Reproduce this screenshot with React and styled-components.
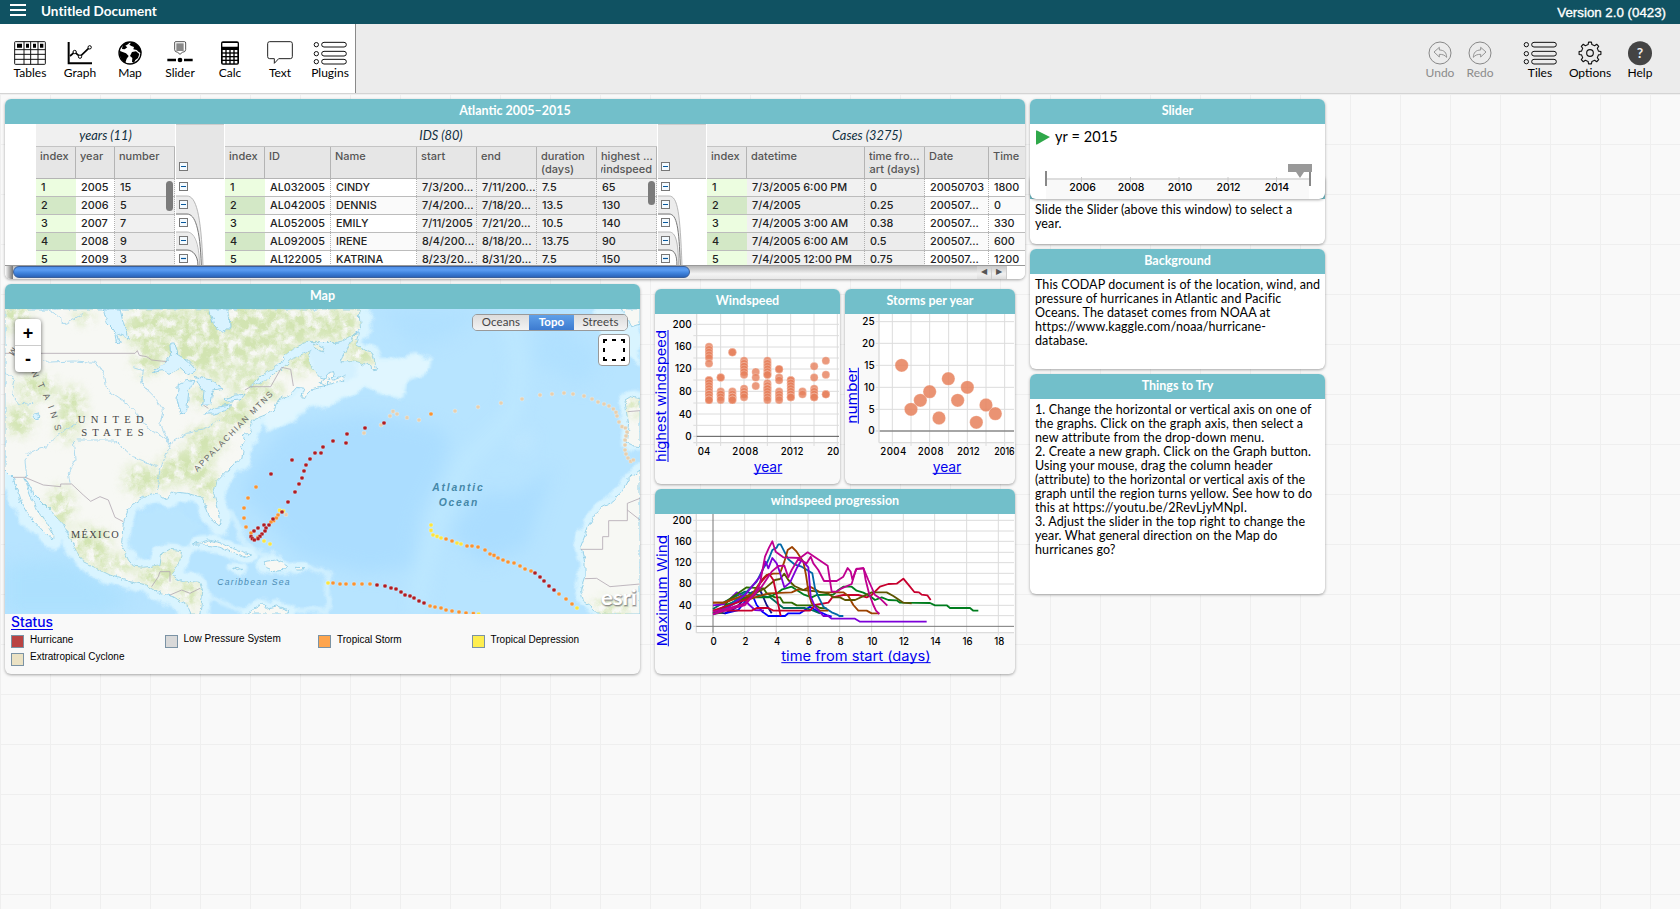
import React from 'react';
import styled, { createGlobalStyle, css } from 'styled-components';

const MUSEO = 'Lato, "Open Sans", sans-serif';
const MONT = 'Inter, "Open Sans", sans-serif';
const ARIAL = '"Liberation Sans", Arial, sans-serif';
const TEAL = '#72bfca';

const GlobalStyle = createGlobalStyle`
  * { box-sizing: border-box; }
  body { margin: 0; background: #f9f9f9; font-family: ${MUSEO}; overflow: hidden; }
`;

const Page = styled.div`
  display: flex;
  flex-direction: column;
  height: 909px;
`;

const TopBar = styled.header`
  display: flex;
  align-items: center;
  justify-content: space-between;
  height: 24px;
  padding: 0 14px 3px 10px;
  background: #105262;
  color: #fff;
`;
const TopLeft = styled.div`
  display: flex;
  align-items: center;
  gap: 15px;
`;
const DocTitle = styled.span`
  font: 700 13.5px ${MUSEO};
  letter-spacing: 0.03px;
`;
const Version = styled.span`
  font: 400 13.3px ${ARIAL};
  -webkit-text-stroke: 0.35px #fff;
  padding-top: 4px;
`;

const Toolbar = styled.nav`
  display: flex;
  justify-content: space-between;
  height: 70px;
  background: #ececec;
  border-bottom: 1px solid #d4d4d4;
`;
const ToolGroup = styled.div`
  display: flex;
  padding: ${(p) => (p.$right ? '17px 15px 0 0' : '17px 0 0 5px')};
  width: ${(p) => (p.$right ? 'auto' : '356px')};
  ${(p) => !p.$right && css`background: #fff; border-right: 1px solid #8a8a8a;`}
`;
const ToolButton = styled.div`
  display: flex;
  flex-direction: column;
  align-items: center;
  width: ${(p) => p.$w || 50}px;
  margin-right: ${(p) => p.$mr || 0}px;
  font: 400 12px/14px ${MUSEO};
  color: ${(p) => (p.$dim ? '#8b8b8b' : '#000')};
  svg { display: block; width: 36px; height: 25px; overflow: visible; }
  span { margin-top: 0; white-space: nowrap; }
`;

const Canvas = styled.main`
  position: relative;
  flex: 1;
  background-color: #f9f9f9;
  background-image:
    linear-gradient(to right, #efefef 1px, transparent 1px),
    linear-gradient(to bottom, #efefef 1px, transparent 1px);
  background-size: 50px 50px;
`;

const Tile = styled.section`
  position: absolute;
  left: ${(p) => p.$x}px;
  top: ${(p) => p.$y - 94}px;
  width: ${(p) => p.$w}px;
  height: ${(p) => p.$h}px;
  display: flex;
  flex-direction: column;
  border-radius: 6px;
  overflow: hidden;
  background: ${(p) => p.$bg || '#fff'};
  box-shadow: 0 1px 3px rgba(0, 0, 0, 0.35);
`;
const TileTitle = styled.h2`
  flex: none;
  margin: 0;
  height: 25px;
  background: ${TEAL};
  color: #fff;
  text-align: center;
  font: 700 12.5px/23px ${MUSEO};
`;

/* ---------- case table ---------- */
const TableBody = styled.div`
  display: flex;
  height: 141px;
  padding-left: 31px;
  overflow: hidden;
`;
const Collection = styled.div`
  position: relative;
  flex: none;
  width: ${(p) => p.$w}px;
`;
const CollectionTitle = styled.div`
  height: 22px;
  background: #f0f0f0;
  text-align: center;
  padding-right: ${(p) => p.$shift || 0}px;
  font: italic 400 12.8px/23px ${MUSEO};
  color: #0f2f40;
`;
const HeadRow = styled.div`
  display: flex;
  height: 33px;
  background: #e6e6e6;
  border-top: 1px solid #c4c4c4;
  border-bottom: 1px solid #b4b4b4;
`;
const HeadCell = styled.div`
  flex: none;
  width: ${(p) => p.$w}px;
  padding: 3px 0 0 4px;
  border-right: 1px solid #b4b4b4;
  font: 500 11px/12.5px ${MONT};
  color: #555;
  white-space: nowrap;
  overflow: hidden;
`;
const HeadLine = styled.div`
  display: flex;
  overflow: hidden;
  ${(p) => p.$clip && css`justify-content: flex-end; margin-right: 4px;`}
`;
const Row = styled.div`
  display: flex;
  height: 18px;
  border-bottom: 1px solid #bcbcbc;
`;
const cellColor = (p) => {
  if (p.$kind === 'index') return p.$even ? '#d3e8c6' : '#ecfde0';
  if (p.$kind === 'formula') return p.$even ? '#ececec' : '#f1f1f1';
  return p.$even ? '#fafafa' : '#fff';
};
const Cell = styled.div`
  flex: none;
  width: ${(p) => p.$w}px;
  padding-left: 5px;
  border-right: 1px ${(p) => (p.$kind === 'index' ? 'solid transparent' : 'dotted #b0b0b0')};
  background: ${cellColor};
  font: 500 10.85px/17px ${MONT};
  color: #222;
  white-space: nowrap;
  overflow: hidden;
`;
const VThumb = styled.div`
  position: absolute;
  right: 2px;
  top: 57px;
  width: 7px;
  height: ${(p) => p.$h}px;
  border-radius: 4px;
  background: #7b7b7b;
`;
const Divider = styled.div`
  position: relative;
  flex: none;
  width: 50px;
  padding: 0 1px;
  svg { display: block; width: 48px; height: 141px; }
`;
const HScroll = styled.div`
  display: flex;
  height: 14px;
  border-top: 1px solid #999;
  background: linear-gradient(#b5b5b5, #f4f4f4 60%, #e8e8e8);
`;
const HTrackEdge = styled.div`
  width: 8px;
  background: linear-gradient(to right, #fff, #aaa 60%, #777);
`;
const HThumb = styled.div`
  width: 677px;
  height: 12px;
  border-radius: 6px;
  border: 1px solid #3a5f99;
  background: linear-gradient(#4f8fe8, #5b9df2 30%, #3f83dd 60%, #2a63b8);
`;
const HArrows = styled.div`
  display: flex;
  margin-left: auto;
  padding-right: 18px;
  background: #fff;
  span {
    width: 15px;
    border-right: 1px solid #ccc;
    background: linear-gradient(#c8c8c8, #f0f0f0 60%, #ddd);
    color: #555;
    font: 8px/12px "DejaVu Sans", sans-serif;
    text-align: center;
  }
`;

const ARCS = [0, 1, 2, 3];
function Relation({ dx }) {
  return (
    <Divider>
      <svg viewBox="0 0 48 141">
        <rect width="48" height="54" fill="#e6e6e6" />
        <path d="M0 .5H48" stroke="#ccc" />
        <path d="M0 54.5H48" stroke="#b4b4b4" />
        <path d={`M0 72H11C21 72 ${25 + dx} 90 ${27 + dx} 141H${25 + dx}C${23 + dx} 100 20 91 11 91H0Z`} fill="#ececec" />
        <path d={`M0 108H11C18 108 22 120 ${24 + dx} 141H${22 + dx}C20 130 16 127 11 127H0Z`} fill="#ececec" />
        {ARCS.map((i) => (
          <path key={i} fill="none" stroke={i % 2 ? '#777' : '#aaa'} strokeWidth={i % 2 ? 1 : 0.8}
            d={`M0 ${72 + i * 18}H11C${20 - i} ${72 + i * 18} ${25 + dx - i} ${90 + i * 14} ${27 + dx - i * 1.7} 141`} />
        ))}
        {[43, 63, 81, 99, 117, 135].map((y) => (
          <g key={y}>
            <rect x="3.5" y={y - 4.5} width="8" height="8" fill="#f3faff" stroke="#777" />
            <path d={`M5 ${y - 0.5}H10`} stroke="#07589c" strokeWidth="1.2" />
          </g>
        ))}
      </svg>
    </Divider>
  );
}

const YEARS = {
  title: 'years (11)', w: 139, shift: 0, thumb: 30,
  cols: [['index', 40, 'index'], ['year', 39], ['number', 60, 'formula']],
  rows: [['1', '2005', '15'], ['2', '2006', '5'], ['3', '2007', '7'], ['4', '2008', '9'], ['5', '2009', '3']],
};
const IDS = {
  title: 'IDS (80)', w: 432, shift: 0, thumb: 24,
  cols: [['index', 40, 'index'], ['ID', 66], ['Name', 86], ['start', 60, 'formula'], ['end', 60, 'formula'],
    ['duration|(days)', 60, 'formula'], ['highest ...|windspeed', 60, 'formula', true]],
  rows: [
    ['1', 'AL032005', 'CINDY', '7/3/200...', '7/11/200...', '7.5', '65'],
    ['2', 'AL042005', 'DENNIS', '7/4/200...', '7/18/20...', '13.5', '130'],
    ['3', 'AL052005', 'EMILY', '7/11/2005', '7/21/20...', '10.5', '140'],
    ['4', 'AL092005', 'IRENE', '8/4/200...', '8/18/20...', '13.75', '90'],
    ['5', 'AL122005', 'KATRINA', '8/23/20...', '8/31/20...', '7.5', '150'],
  ],
};
const CASES = {
  title: 'Cases (3275)', w: 324, shift: 4,
  cols: [['index', 40, 'index'], ['datetime', 118, 'formula'], ['time fro...|start (days)', 60, 'formula', true],
    ['Date', 64], ['Time', 42]],
  rows: [
    ['1', '7/3/2005 6:00 PM', '0', '20050703', '1800'],
    ['2', '7/4/2005', '0.25', '200507...', '0'],
    ['3', '7/4/2005 3:00 AM', '0.38', '200507...', '330'],
    ['4', '7/4/2005 6:00 AM', '0.5', '200507...', '600'],
    ['5', '7/4/2005 12:00 PM', '0.75', '200507...', '1200'],
  ],
};

function CollectionTable({ data }) {
  return (
    <Collection $w={data.w}>
      <CollectionTitle $shift={data.shift}>{data.title}</CollectionTitle>
      <HeadRow>
        {data.cols.map(([name, w, , clip]) => (
          <HeadCell key={name} $w={w}>
            {name.split('|').map((line, i) => <HeadLine key={line} $clip={clip && i === 1}>{line}</HeadLine>)}
          </HeadCell>
        ))}
      </HeadRow>
      {data.rows.map((row, r) => (
        <Row key={row[0]}>
          {row.map((v, c) => (
            <Cell key={c} $w={data.cols[c][1]} $kind={data.cols[c][2]} $even={r % 2 === 1}>{v}</Cell>
          ))}
        </Row>
      ))}
      {data.thumb && <VThumb $h={data.thumb} />}
    </Collection>
  );
}

/* ---------- text & slider tiles ---------- */
const TextBody = styled.div`
  padding: 4px 5px 0;
  font: 400 12.5px/14px ${MUSEO};
  color: #000;
  letter-spacing: 0.1px;
  div { white-space: nowrap; }
`;
const SliderHead = styled.div`
  display: flex;
  align-items: center;
  gap: 5px;
  padding: 5px 0 0 6px;
  font: 400 14.5px/16px ${MUSEO};
  letter-spacing: 0.1px;
`;
const SliderScale = styled.svg`
  display: block;
  width: 295px;
  height: 40px;
  margin-top: 14px;
  font: 500 10.5px ${MONT};
`;

/* ---------- map tile ---------- */
const MapArea = styled.div`
  position: relative;
  flex: none;
  height: 305px;
`;
const MapDrawing = styled.svg`
  display: block;
  width: 635px;
  height: 305px;
`;
const ZoomBox = styled.div`
  position: absolute;
  left: 10px;
  top: 10px;
  width: 26px;
  height: 53px;
  border-radius: 4px;
  background: #fff;
  box-shadow: 0 1px 4px rgba(0, 0, 0, 0.6);
  font: 700 18px/29px ${ARIAL};
  text-align: center;
  div:first-child { height: 27px; border-bottom: 1px solid #ccc; }
  div:last-child { line-height: 26px; }
`;
const Segments = styled.div`
  position: absolute;
  right: 12px;
  top: 5px;
  display: flex;
  height: 17px;
  border: 1px solid #999;
  border-radius: 5px;
  overflow: hidden;
`;
const Segment = styled.div`
  width: ${(p) => p.$w}px;
  text-align: center;
  font: ${(p) => (p.$on ? 700 : 400)} 11.5px/14px ${MUSEO};
  letter-spacing: 0.1px;
  color: ${(p) => (p.$on ? '#fff' : '#444')};
  background: ${(p) => (p.$on ? 'linear-gradient(#5fa0e8, #3d7bd0)' : 'linear-gradient(#dcdcdc, #f3f3f3)')};
`;
const Marquee = styled.div`
  position: absolute;
  right: 10px;
  top: 25px;
  width: 32px;
  height: 32px;
  border: 1px solid #999;
  border-radius: 4px;
  background: #fff;
  padding: 4px;
  svg { display: block; }
`;
const Legend = styled.div`
  padding: 0 6px;
`;
const LegendTitle = styled.div`
  width: 44px;
  font: 500 13.8px/17px ${MONT};
  color: #00e;
  text-decoration: underline;
  text-underline-offset: 2px;
`;
const LegendGrid = styled.div`
  display: grid;
  grid-template-columns: repeat(4, 153.5px);
  row-gap: 5px;
  margin-top: 3px;
`;
const LegendItem = styled.div`
  display: flex;
  align-items: flex-start;
  gap: 6px;
  height: 13px;
  font: 400 10px/10px ${ARIAL};
  color: #000;
  white-space: nowrap;
  i { flex: none; width: 13px; height: 13px; border: 1px solid #7b93a5; background: ${(p) => p.$c}; margin-top: 1px; }
  span { margin-top: ${(p) => (p.$up ? 0 : 1)}px; }
`;

const NA = 'M15 87H1080L1078 110 1082 150 1050 170 1030 182 1010 187 960 188 920 187 880 205 855 225 840 250 780 290 750 322 800 300 850 262 880 235 930 212 925 240 940 268 962 292 1000 300 1040 285 1030 300 990 312 940 325 915 352 902 350 912 325 890 322 870 345 830 362 820 390 795 405 762 418 748 440 756 455 730 465 735 480 722 500 732 515 728 535 705 548 680 575 650 605 640 640 655 690 663 720 655 738 640 725 625 700 615 670 600 650 560 640 520 635 508 645 500 660 470 640 430 652 390 678 370 725 365 790 385 840 400 858 430 862 480 855 485 820 510 808 545 812 540 840 525 870 515 885 545 905 600 910 608 935 600 1002H572L560 975 520 950 480 940 440 915 390 905 330 885 250 845 230 815 190 735 150 690 100 640 75 595 90 640 110 690 140 730 160 765 158 778 140 765 90 710 60 660 40 595 15 570Z';
const AFRICA = 'M1920 570L1885 597 1865 635 1840 665 1800 685 1765 740 1742 800 1755 850 1755 890 1742 930 1750 965 1780 985 1795 1002H1920Z';
const SPAIN = 'M1920 352L1895 348 1875 360 1880 400 1886 430 1878 490 1895 497 1920 500Z';
const FRANCE = 'M1860 87L1885 115 1895 140 1920 132V87Z';
const NFLD = 'M1020 245L1045 200 1065 160 1078 158 1070 195 1095 210 1115 215 1125 245 1130 270 1118 272 1105 250 1090 255 1060 245Z';
const ISLANDS = 'M580 795L625 780 670 790 700 805 755 825 740 832 690 815 660 802 620 795ZM790 845L830 840 865 860 850 868 815 872 800 866ZM885 862L912 863 908 870 887 870ZM700 864L725 868 712 872ZM740 1002L765 985 790 970 800 985 830 978 865 990V1002ZM960 310L985 280 1000 275 1005 288 975 318ZM940 192L975 205 970 216 945 205Z';
const LAKES = 'M460 277L490 252 515 222 512 190 522 188 530 222 560 240 590 272 562 285 540 265 510 280 490 272ZM535 312L560 298 582 302 566 335 560 392 542 402 531 360ZM585 290L632 300 668 325 640 330 632 372 608 378 612 335 600 318ZM608 402L650 382 698 374 690 386 640 402ZM672 357L700 346 735 343 720 360 682 364ZM628 87L640 130 668 160 690 140 686 87ZM310 87L322 130 342 150 350 188 360 186 352 160 385 175 370 130 360 87ZM100 405L112 395 120 412 108 418Z';
const RIVERS = 'M130 247L220 243 290 247 315 290 320 330 380 370 410 400 450 450 490 470 515 490 M420 290L440 330 470 360 490 390 480 430 510 495 480 570 470 630 M230 480L340 480 400 530 470 560 M510 490L560 460 610 450 660 420 M80 520L140 500 190 450 230 430 M15 280L45 300 35 340 60 375 100 370 M80 590L75 540 90 520 M220 480L225 540 205 580 210 608 M150 90L200 130 250 100 M400 260L430 270 425 310';
const GREENS = [[520, 150, 150, 70], [700, 150, 130, 90], [850, 130, 120, 60], [600, 220, 100, 50], [900, 240, 60, 40], [1010, 130, 60, 40], [780, 330, 70, 30], [700, 400, 55, 45], [620, 480, 60, 45], [560, 560, 80, 50], [620, 620, 40, 40], [480, 600, 40, 25], [420, 600, 50, 45], [200, 440, 30, 50], [110, 320, 60, 40], [40, 110, 50, 40], [60, 420, 40, 50], [215, 380, 40, 60], [180, 680, 40, 60], [270, 790, 60, 50], [340, 850, 70, 25], [470, 890, 60, 35], [520, 850, 35, 35], [570, 940, 30, 50], [250, 110, 30, 20], [440, 250, 40, 35], [600, 350, 25, 30], [1080, 220, 50, 40], [1830, 985, 60, 25], [1900, 380, 30, 25]];

const HURRICANE = [[876, 540], [813, 582], [969, 501], [945, 519], [963, 519], [930, 537], [918, 555], [912, 573], [906, 594], [897, 612], [885, 636], [864, 666], [846, 696], [819, 717], [807, 735], [792, 735], [798, 744], [774, 744], [795, 753], [762, 753], [786, 762], [753, 770], [780, 769], [757, 776], [774, 776], [763, 780], [999, 483], [1038, 489], [1041, 462], [1095, 444], [1152, 429],
  [1131, 915], [1155, 918], [1173, 924], [1188, 927], [1203, 936], [1215, 945], [1230, 948], [1242, 954], [1257, 963], [1272, 969], [1605, 879], [1620, 891], [1632, 903], [1647, 918], [1662, 930]];
const STORM = [[768, 621], [744, 654], [732, 684], [732, 714], [738, 741], [753, 759], [774, 772], [834, 705], [829, 714], [821, 722], [813, 726], [1293, 402], [999, 909], [1020, 912], [1038, 912], [1062, 912], [1086, 912], [1110, 912], [1290, 978], [1305, 981], [1323, 984], [1338, 990], [1356, 993], [1377, 996], [1398, 999], [1420, 1001], [1338, 777], [1356, 783], [1401, 798], [1416, 798], [1434, 801], [1455, 810], [1470, 822], [1482, 826], [1494, 834], [1509, 840], [1524, 846], [1542, 849], [1560, 858], [1575, 867], [1593, 873], [1677, 942], [1698, 957], [1716, 972]];
const DEPRESSION = [[839, 691], [850, 693], [792, 783], [810, 792], [984, 909], [1293, 735], [1293, 751], [1299, 765], [1311, 769], [1323, 774], [1371, 789], [1383, 792], [1731, 984], [1436, 1002]];
const CYCLONE = [[1143, 435], [1092, 459], [1170, 408], [1179, 394], [1191, 402], [1221, 413], [1257, 420], [1365, 393], [1434, 381], [1503, 369], [1566, 357], [1620, 345], [1656, 342], [1692, 339], [1719, 342], [1752, 348], [1776, 357], [1794, 366], [1812, 372], [1827, 378], [1840, 387], [1848, 397], [1851, 408], [1857, 426], [1866, 440], [1876, 444], [1881, 456], [1878, 468], [1875, 480], [1875, 495], [1875, 510], [1878, 522], [1884, 534], [1892, 544], [1900, 540], [858, 704]];

const Dots = ({ pts, fill }) => pts.map(([x, y], i) => (
  <rect key={i} x={x - 5.5} y={y - 5.5} width="11" height="11" rx="3" fill={fill} stroke="#fff" strokeOpacity=".4" strokeWidth="2" />
));

const Atlas = () => (
  <MapDrawing viewBox="15 87 1905 915" preserveAspectRatio="none">
    <defs>
      <filter id="soft" x="-20%" y="-20%" width="140%" height="140%" colorInterpolationFilters="sRGB"><feGaussianBlur stdDeviation="26" /></filter>
      <filter id="shelf" x="-10%" y="-10%" width="120%" height="120%" colorInterpolationFilters="sRGB">
        <feGaussianBlur stdDeviation="5" result="b" />
        <feTurbulence type="fractalNoise" baseFrequency="0.02" numOctaves="3" seed="3" result="t" />
        <feDisplacementMap in="b" in2="t" scale="34" xChannelSelector="R" yChannelSelector="G" />
      </filter>
      <filter id="mottle" x="0" y="0" width="100%" height="100%" colorInterpolationFilters="sRGB">
        <feGaussianBlur stdDeviation="16" result="b" />
        <feTurbulence type="fractalNoise" baseFrequency="0.035" numOctaves="5" seed="4" />
        <feColorMatrix values="0 0 0 0 0  0 0 0 0 0  0 0 0 0 0  2.6 0 0 0 -0.65" result="n" />
        <feComposite in="b" in2="n" operator="in" />
      </filter>
      <filter id="rough" x="-5%" y="-5%" width="110%" height="110%" colorInterpolationFilters="sRGB">
        <feTurbulence type="fractalNoise" baseFrequency="0.05" numOctaves="3" seed="8" result="t" />
        <feDisplacementMap in="SourceGraphic" in2="t" scale="16" xChannelSelector="R" yChannelSelector="G" />
      </filter>
      <clipPath id="landclip"><path d={NA + AFRICA + SPAIN + FRANCE + NFLD + ISLANDS} /></clipPath>
    </defs>
    <rect x="15" y="87" width="1905" height="915" fill="#b7e4ff" />
    <g filter="url(#soft)">
      <path d="M760 560L860 440 1100 400 1300 440 1350 470 1330 560 1260 700 1240 860 1100 880 900 830 780 700 720 640Z" fill="#abddff" />
      <path d="M1660 560L1560 640 1440 640 1350 760 1450 850 1580 800Z" fill="#abddff" />
      <path d="M1140 87L1240 200 1340 180 1440 100 1500 87ZM1640 100L1800 230 1750 320 1600 240Z" fill="#b0e0ff" />
      <path d="M15 850L200 840 400 960 300 1002 15 1002Z" fill="#ace0fe" />
      <path d="M1520 87L1560 250 1540 400 1400 540 1320 700 1270 860 1250 1002" fill="none" stroke="#bfe9ff" strokeWidth="34" />
      <path d="M1540 480L1610 460 1560 520Z" fill="#c6eafe" />
    </g>
    <g filter="url(#shelf)" fill="none" stroke="#d9f4ff" strokeLinejoin="round">
      <path d={NA} strokeWidth="56" />
      <path d={AFRICA + SPAIN + FRANCE} strokeWidth="34" />
      <path d={NFLD + ISLANDS} strokeWidth="34" />
      <path d="M1050 240L1180 240 1240 220 1290 240 1285 275 1220 300 1205 355 1150 340 1100 322 1020 360 900 400 800 450 780 400 900 330 1040 290Z" fill="#e0f6ff" strokeWidth="8" />
      <path d="M900 190L1080 185 1060 300 960 290Z" fill="#d4f1ff" />
      <path d="M690 690L740 790 850 850M605 900L640 960 740 990 980 990 985 890 900 850" strokeWidth="18" strokeOpacity=".7" />
      <path d="M1790 87L1810 180 1920 250V87Z" fill="#d9f4ff" strokeWidth="6" />
    </g>
    <path d="M420 700L540 690 600 740 560 800 480 790 410 840 385 780Z" fill="#b9e5fe" filter="url(#shelf)" />
    <g filter="url(#rough)">
      <path d={NA + AFRICA + SPAIN + FRANCE + NFLD + ISLANDS} fill="#f7f8f4" stroke="#8ccbe6" strokeWidth="2.5" />
      <g clipPath="url(#landclip)">
        <g filter="url(#mottle)" fill="#d2e4b2">
          {GREENS.map(([x, y, rx, ry]) => <ellipse key={x + '-' + y} cx={x} cy={y} rx={rx} ry={ry} />)}
          <path d="M385 87H1080V188H920L780 300 700 330 600 290 470 230 400 210Z" fillOpacity=".75" />
        </g>
      </g>
      <path d={LAKES} fill="#d9f3ff" stroke="#8ccbe6" strokeWidth="2.5" />
      <path d={RIVERS} fill="none" stroke="#a4d6ee" strokeWidth="2.6" />
    </g>
    <g fill="none" stroke="#b3a9b3" strokeWidth="2.5">
      <path d="M15 220H405L412 212 418 226 440 230 455 240 500 245M625 385L610 375M735 330L752 320H812L845 262 872 268 880 318M40 592H75L130 615 182 620V612H215L250 645 272 664 300 650 325 660 345 712 370 725M455 920L475 890 480 875H510V905M510 945L545 930 570 940 600 925M1742 808H1808V770H1826V722H1882V670L1920 655M1882 690L1920 720M1755 896L1790 895 1830 920 1920 912M1883 395L1920 392" />
    </g>
    <Dots pts={CYCLONE} fill="#e8cfae" />
    <Dots pts={DEPRESSION} fill="#fde53c" />
    <Dots pts={STORM} fill="#fb922f" />
    <Dots pts={HURRICANE} fill="#b01c22" />
    <g fontFamily='"Liberation Serif", serif' fontSize="32" fill="#444">
      <text x="233" y="429" textLength="198">UNITED</text>
      <text x="244" y="468" textLength="187">STATES</text>
      <text x="213" y="774" fontSize="31" textLength="143">MÉXICO</text>
    </g>
    <g fontFamily={ARIAL} fill="#666" fontSize="25">
      <text transform="translate(592 576) rotate(-45.5)" textLength="325">APPALACHIAN MTNS</text>
      <g fontSize="27">
        <text transform="translate(38 200) rotate(125)">M</text>
        <text transform="translate(94 276) rotate(70)">N</text>
        <text transform="translate(112 312) rotate(67)">T</text>
        <text transform="translate(128 345) rotate(65)">A</text>
        <text transform="translate(143 380) rotate(68)">I</text>
        <text transform="translate(150 398) rotate(72)">N</text>
        <text transform="translate(162 436) rotate(76)">S</text>
      </g>
    </g>
    <g fontFamily={ARIAL} fontStyle="italic" fill="#4a8cb4">
      <text x="652" y="915" fontSize="26" textLength="217">Caribbean Sea</text>
      <text x="1297" y="633" fontSize="31" fontWeight="700" textLength="151" fill="#4587a8">Atlantic</text>
      <text x="1316" y="678" fontSize="31" fontWeight="700" textLength="116" fill="#4587a8">Ocean</text>
    </g>
    <g fontFamily={MUSEO} fontWeight="700" fontSize="62">
      <text x="1804" y="977" textLength="108" lengthAdjust="spacingAndGlyphs" fill="#777" fillOpacity=".7" stroke="#777" strokeOpacity=".35" strokeWidth="5">esri</text>
      <text x="1802" y="974" textLength="108" lengthAdjust="spacingAndGlyphs" fill="#fff">esri</text>
    </g>
  </MapDrawing>
);

/* ---------- graphs ---------- */
const Chart = styled.svg`
  display: block;
  width: 100%;
  height: ${(p) => p.$h}px;
  font-family: ${MONT};
  font-weight: 500;
  font-size: 30px;
`;
const AxisText = styled.text`
  font-size: 41px;
  font-weight: 400;
  fill: #00e;
  text-anchor: middle;
`;
function AxisLink({ x = 0, y = 0, len, turn, children }) {
  return (
    <g transform={turn}>
      <AxisText x={x} y={y} textLength={len} lengthAdjust="spacingAndGlyphs">{children}</AxisText>
      <path d={`M${x - len / 2} ${y + 5}H${x + len / 2}`} stroke="#00e" strokeWidth="3" />
    </g>
  );
}
const WS = {
  2005: [160, 155, 150, 145, 140, 130, 100, 100, 95, 90, 85, 80, 75, 75, 70, 65, 65], 2006: [105, 105, 80, 75, 75, 70, 65],
  2007: [150, 150, 80, 75, 70, 70, 65, 65], 2008: [135, 130, 125, 125, 120, 115, 110, 85, 80, 75, 75, 70],
  2009: [115, 105, 90], 2010: [135, 130, 125, 120, 115, 110, 110, 95, 90, 85, 85, 80, 75, 70, 65],
  2011: [120, 120, 105, 100, 80, 75, 70, 65], 2012: [100, 100, 95, 90, 85, 80, 75, 70, 70], 2013: [80, 75],
  2014: [125, 105, 85, 80, 75, 70, 70], 2015: [135, 110, 75, 75],
};
const G = '#dcdcdc';
const Windspeed = () => (
  <Chart $h={170} viewBox="30 102 555 510" preserveAspectRatio="none">
    <rect x="155" y="102" width="427" height="386" fill="#fff" />
    <g stroke={G} strokeWidth="3">
      {[227, 297, 367, 437, 507, 577].map((x) => <path key={x} d={`M${x} 102V498`} />)}
      {[133, 167, 201, 234, 267, 300, 334, 369, 402, 436].map((y) => <path key={y} d={`M145 ${y}H582`} />)}
      <path d="M155 102V498M145 488H582M145 469H155" strokeWidth="4" />
    </g>
    <path d="M155 469H582" stroke="#555" strokeWidth="3" />
    {Object.entries(WS).flatMap(([yr, vs]) => vs.map((v, i) => (
      <circle key={yr + i} cx={157 + (yr - 2004) * 35.05} cy={469 - v * 1.68} r="12" fill="#e6805b" fillOpacity=".8" stroke="#fff" strokeOpacity=".4" strokeWidth="2" />
    )))}
    <g textAnchor="end">
      {[[200, 143], [160, 211], [120, 277], [80, 344], [40, 413], [0, 479]].map(([t, y]) => <text key={t} x="140" y={y}>{t}</text>)}
    </g>
    <g>
      <text x="158" y="524" fontSize="29">04</text>
      <text x="262" y="524" fontSize="29" textLength="78">2008</text>
      <text x="407" y="524" fontSize="29" textLength="68">2012</text>
      <text x="546" y="524" fontSize="29">20</text>
    </g>
    <AxisLink x={369} y={575} len={86}>year</AxisLink>
    <AxisLink turn="translate(64 348) rotate(-90)" len={396}>highest windspeed</AxisLink>
  </Chart>
);
const Storms = () => (
  <Chart $h={170} viewBox="30 102 510 510" preserveAspectRatio="none">
    <rect x="133" y="102" width="404" height="385" fill="#fff" />
    <g stroke={G} strokeWidth="3">
      {[172, 228, 284, 341, 397, 453, 509].map((x) => <path key={x} d={`M${x} 102V498`} />)}
      {[125, 190, 256, 322, 388].map((y) => <path key={y} d={`M122 ${y}H537`} />)}
      <path d="M132 102V488M132 488H537M122 453H132" strokeWidth="4" />
    </g>
    <path d="M134 453H537" stroke="#888" strokeWidth="4" />
    {[[200, 256], [228, 388], [256, 361], [284, 335], [312, 414], [340, 296], [368, 361], [397, 322], [424, 427], [453, 375], [481, 401]].map(([x, y]) => (
      <circle key={x} cx={x} cy={y} r="20" fill="#e6805b" fillOpacity=".85" stroke="#fff" strokeOpacity=".4" strokeWidth="2" />
    ))}
    <g textAnchor="end">
      {[[25, 135], [20, 200], [15, 266], [10, 332], [5, 398], [0, 463]].map(([t, y]) => <text key={t} x="119" y={y}>{t}</text>)}
    </g>
    <g fontSize="29">
      <text x="136" y="524" textLength="78">2004</text>
      <text x="248" y="524" textLength="78">2008</text>
      <text x="366" y="524" textLength="68">2012</text>
      <text x="478" y="524" textLength="61" lengthAdjust="spacingAndGlyphs">2016</text>
    </g>
    <AxisLink x={336} y={575} len={86}>year</AxisLink>
    <AxisLink turn="translate(65 347) rotate(-90)" len={168}>number</AxisLink>
  </Chart>
);
const LINES = [
  ['#118', '204,395 240,400 270,385 320,337 345,330 352,345 365,375 380,400'],
  ['#00f', '240,400 280,390 320,340 335,375 352,395 370,408 420,408 430,400 465,400 495,380 515,392 545,405 560,410'],
  ['#006d5b', '204,387 240,365 270,350 300,335 340,345 375,352 400,372 415,384 480,384 505,392 525,400'],
  ['#7d00d8', '204,376 240,372 275,337 295,350 310,372 330,390 357,392'],
  ['#c7002e', '204,392 320,392 335,384 370,384 385,392 495,392 510,375 550,368 562,352 595,345 640,345 665,352 680,345 705,320 730,312 755,311 775,296 790,314 808,336 822,337 830,344 847,346 857,360'],
  ['#2f6b00', '204,402 230,398 250,360 305,322 355,325 365,340 390,352 405,352 415,368 440,368 455,376 510,376 525,384 545,385'],
  ['#007d1e', '204,400 250,372 300,352 370,352 385,345 400,337 412,328 440,320 455,330 475,343 500,352 515,345 565,344 580,330 595,320 620,320 635,332 655,338 675,348 690,360 710,352 730,360 755,361 765,368 855,369 870,376 905,376 915,384 975,384 985,392 1000,392'],
  ['#9c4200', '204,368 235,368 270,355 300,362 330,352 370,340 440,337 460,328 475,330 495,320 510,328 525,337 595,337 610,348 625,375 640,392 665,392 680,400 703,400'],
  ['#5c5400', '204,395 260,375 330,340 360,325 390,300 405,297 418,281 430,300 448,318 475,330 520,335 548,340 565,352 585,352 600,360 630,360 680,337 725,337 745,348 775,368 800,370'],
  ['#0068a8', '204,395 240,385 300,340 335,305 355,265 365,250 372,235 382,210 395,203 400,193 407,193 430,238 450,254 470,260 490,272 502,280 510,325 520,350 535,380 560,397 575,403 583,408 595,408'],
  ['#9c4200', '204,368 240,368 285,350 320,345 350,300 365,285 385,281 405,280 418,245 428,210 441,201 455,215 475,245 483,285 492,345 500,370 515,385 525,392 550,392'],
  ['#7d00d8', '204,403 240,390 300,345 345,290 362,245 370,265 382,234 395,250 405,278 418,322 435,308 455,265 470,240 490,262 497,350 510,380 535,408 550,408 560,416 630,416 645,425 845,425'],
  ['#c7002e', '204,392 240,380 300,360 330,345 345,310 360,293 373,282 385,300 395,345 400,375 407,408'],
  ['#bf0090', '204,402 240,392 300,375 330,340 345,310 360,230 372,203 382,184 392,215 415,232 465,234 488,217 548,257 560,335 575,335 590,325 620,312 633,268 655,264 670,300 690,345 705,355 727,377'],
  ['#bf0090', '204,395 250,385 300,370 350,320 380,275 400,258 418,257 430,292 440,270 460,237 485,250 497,230 505,250 520,270 537,303 575,303 595,290 608,264 617,275 622,298 635,266 656,266 662,300 672,340 685,375 693,392 703,402'],
];
const Progression = () => (
  <Chart $h={160} viewBox="30 102 1080 480" preserveAspectRatio="none">
    <rect x="155" y="102" width="952" height="356" fill="#fff" />
    <g stroke={G} strokeWidth="3">
      {[299, 394, 489, 584, 680, 775, 869, 965, 1060].map((x) => <path key={x} d={`M${x} 102V467`} />)}
      {[121, 153, 184, 217, 248, 280, 312, 344, 376, 407].map((y) => <path key={y} d={`M145 ${y}H1107`} />)}
      <path d="M154 102V458M154 458H1107M145 439H155M204 458V467" strokeWidth="4" />
    </g>
    <path d="M204 102V458M154 439H1107" stroke="#777" strokeWidth="3" />
    {LINES.map(([c, pts], i) => <polyline key={i} points={pts} fill="none" stroke={c} strokeWidth="5.5" strokeLinejoin="round" />)}
    <g textAnchor="end">
      {[[200, 131], [160, 194], [120, 258], [80, 322], [40, 386], [0, 449]].map(([t, y]) => <text key={t} x="140" y={y}>{t}</text>)}
    </g>
    <g textAnchor="middle" fontSize="29">
      {[0, 2, 4, 6, 8, 10, 12, 14, 16, 18].map((t) => <text key={t} x={206 + t * 47.6} y="494">{t}</text>)}
    </g>
    <AxisLink x={633} y={543} len={448}>time from start (days)</AxisLink>
    <AxisLink turn="translate(65 332) rotate(-90)" len={334}>Maximum Wind</AxisLink>
  </Chart>
);

/* ---------- toolbar icons ---------- */
const ListGlyph = ({ x }) => (
  <svg viewBox={`${x} 123 108 75`} fill="none" stroke="#111" strokeWidth="3">
    {[134, 161, 185].map((y) => (
      <g key={y}>
        <circle cx={x + 13} cy={y} r="6.5" />
        <rect x={x + 29} y={y - 7} width="74" height="14" rx="7" />
      </g>
    ))}
  </svg>
);
const TablesGlyph = () => (
  <svg viewBox="36 123 108 75" fill="none" stroke="#111" strokeWidth="3">
    <rect x="44" y="125" width="92" height="68" rx="2" />
    <path d="M44 149H136M44 163H136M44 178H136M72 125V193M92 125V193M114 125V193" />
    <path d="M51 137H66M78 137H87M99 137H108M120 137H130" stroke="#000" strokeWidth="12" />
  </svg>
);
const GraphGlyph = () => (
  <svg viewBox="186 123 108 75" fill="none" stroke="#000" strokeWidth="4">
    <path d="M206 126V190H276" strokeWidth="6" />
    <path d="M210 168L224 156 240 170 268 143" strokeWidth="5" />
    <g fill="#fff" strokeWidth="3"><circle cx="224" cy="156" r="5" /><circle cx="240" cy="170" r="5" /><circle cx="269" cy="142" r="5" /></g>
  </svg>
);
const GlobeGlyph = () => (
  <svg viewBox="336 123 108 75">
    <circle cx="390" cy="159" r="33" fill="#fff" stroke="#000" strokeWidth="4" />
    <path d="M368 136C374 129 384 126 390 127L384 133 376 137 382 142 374 148 366 147Z" />
    <path d="M358 152L368 156 378 160 386 168 380 176 376 188 370 184C361 176 357 164 358 152Z" />
    <path d="M394 127C412 130 424 144 424 160L416 156 410 150 400 148 402 141 394 138 388 134Z" />
    <path d="M396 156L408 154 418 162 414 174 406 180 402 189 396 186 397 174 390 168Z" />
  </svg>
);
const SliderGlyph = () => (
  <svg viewBox="486 123 108 75">
    <path d="M526 125H554Q557 125 557 129V149Q557 156 547 157L540 163 533 157Q524 156 524 149V129Q524 125 526 125Z" fill="#fff" stroke="#333" strokeWidth="2.5" />
    <rect x="529" y="130" width="22" height="23" fill="#888" />
    <path d="M502 180H528M552 180H578" stroke="#000" strokeWidth="7" />
    <circle cx="540" cy="180" r="7" />
  </svg>
);
const CalcGlyph = () => (
  <svg viewBox="636 123 108 75">
    <rect x="663" y="124" width="54" height="70" rx="6" />
    <rect x="667" y="129" width="46" height="11" rx="1" fill="#fff" />
    {[150, 161, 172, 183].map((y) => [668, 680, 692, 704].map((x) => <rect key={x + y * 1000} x={x} y={y} width="8" height="7" fill="#fff" />))}
  </svg>
);
const TextGlyph = () => (
  <svg viewBox="786 123 108 75" fill="none" stroke="#222" strokeWidth="3">
    <path d="M809 125H871Q877 125 877 131V170Q877 176 871 176H836L823 190V176H809Q803 176 803 170V131Q803 125 809 125Z" />
  </svg>
);
const ArrowGlyph = ({ flip }) => (
  <svg viewBox="126 123 108 75" fill="none" stroke="#888" strokeWidth="3">
    <g transform={flip ? 'translate(360 0) scale(-1 1)' : undefined}>
      <circle cx="180" cy="159" r="33" />
      <path d="M162 156L178 142V150C192 150 200 158 200 172 194 165 188 163 178 163V171Z" strokeWidth="2.6" />
    </g>
  </svg>
);
const gear = () => {
  const p = [];
  for (let i = 0; i < 8; i += 1) {
    [[-0.22, 26], [-0.13, 33], [0.13, 33], [0.22, 26]].forEach(([d, r]) => {
      const a = (i * Math.PI) / 4 + d;
      p.push(`${(630 + Math.sin(a) * r).toFixed(1)},${(159 - Math.cos(a) * r).toFixed(1)}`);
    });
  }
  return p.join(' ');
};
const GearGlyph = () => (
  <svg viewBox="576 123 108 75" fill="none" stroke="#111" strokeWidth="3.4" strokeLinejoin="round">
    <polygon points={gear()} />
    <circle cx="630" cy="159" r="10" />
  </svg>
);
const HelpGlyph = () => (
  <svg viewBox="726 123 108 75">
    <circle cx="780" cy="160" r="36" fill="#444" />
    <text x="780" y="174" textAnchor="middle" fontFamily={MUSEO} fontWeight="700" fontSize="42" fill="#ececec">?</text>
  </svg>
);

const LEFT_TOOLS = [
  ['Tables', <TablesGlyph />], ['Graph', <GraphGlyph />], ['Map', <GlobeGlyph />], ['Slider', <SliderGlyph />],
  ['Calc', <CalcGlyph />], ['Text', <TextGlyph />], ['Plugins', <ListGlyph x={936} />],
];

export default function App() {
  return (
    <Page>
      <GlobalStyle />
      <TopBar>
        <TopLeft>
          <svg width="16" height="13" viewBox="0 0 16 13"><path d="M0 1H16M0 6H16M0 11H16" stroke="#fff" strokeWidth="2" /></svg>
          <DocTitle>Untitled Document</DocTitle>
        </TopLeft>
        <Version>Version 2.0 (0423)</Version>
      </TopBar>
      <Toolbar>
        <ToolGroup>
          {LEFT_TOOLS.map(([name, icon]) => <ToolButton key={name}>{icon}<span>{name}</span></ToolButton>)}
        </ToolGroup>
        <ToolGroup $right>
          <ToolButton $w={40} $dim><ArrowGlyph /><span>Undo</span></ToolButton>
          <ToolButton $w={40} $mr={15} $dim><ArrowGlyph flip /><span>Redo</span></ToolButton>
          <ToolButton><ListGlyph x={426} /><span>Tiles</span></ToolButton>
          <ToolButton><GearGlyph /><span>Options</span></ToolButton>
          <ToolButton><HelpGlyph /><span>Help</span></ToolButton>
        </ToolGroup>
      </Toolbar>
      <Canvas>
        <Tile $x={5} $y={99} $w={1020} $h={180}>
          <TileTitle>Atlantic 2005–2015</TileTitle>
          <TableBody>
            <CollectionTable data={YEARS} />
            <Relation dx={0} />
            <CollectionTable data={IDS} />
            <Relation dx={-3} />
            <CollectionTable data={CASES} />
          </TableBody>
          <HScroll>
            <HTrackEdge />
            <HThumb />
            <HArrows><span>◀</span><span>▶</span></HArrows>
          </HScroll>
        </Tile>

        <Tile $x={5} $y={284} $w={635} $h={390} $bg="#f9f9f9">
          <TileTitle>Map</TileTitle>
          <MapArea>
            <Atlas />
            <ZoomBox><div>+</div><div>-</div></ZoomBox>
            <Segments>
              <Segment $w={56}>Oceans</Segment>
              <Segment $w={45} $on>Topo</Segment>
              <Segment $w={53}>Streets</Segment>
            </Segments>
            <Marquee>
              <svg width="22" height="22" viewBox="0 0 22 22">
                <path d="M1 4V1H4M9 1H13M18 1H21V4M21 9V13M21 18V21H18M13 21H9M4 21H1V18M1 13V9" fill="none" stroke="#000" strokeWidth="2" />
              </svg>
            </Marquee>
          </MapArea>
          <Legend>
            <LegendTitle>Status</LegendTitle>
            <LegendGrid>
              <LegendItem $c="#b94343"><i /><span>Hurricane</span></LegendItem>
              <LegendItem $c="#d9d9d9" $up><i /><span>Low Pressure System</span></LegendItem>
              <LegendItem $c="#fea54e"><i /><span>Tropical Storm</span></LegendItem>
              <LegendItem $c="#feee50"><i /><span>Tropical Depression</span></LegendItem>
              <LegendItem $c="#ebe2c4" $up><i /><span>Extratropical Cyclone</span></LegendItem>
            </LegendGrid>
          </Legend>
        </Tile>

        <Tile $x={655} $y={289} $w={185} $h={195} $bg="#f9f9f9">
          <TileTitle>Windspeed</TileTitle>
          <Windspeed />
        </Tile>
        <Tile $x={845} $y={289} $w={170} $h={195} $bg="#f9f9f9">
          <TileTitle>Storms per year</TileTitle>
          <Storms />
        </Tile>
        <Tile $x={655} $y={489} $w={360} $h={185} $bg="#f9f9f9">
          <TileTitle>windspeed progression</TileTitle>
          <Progression />
        </Tile>

        <Tile $x={1030} $y={174} $w={295} $h={70}>
          <TileTitle />
          <TextBody>
            <div>Slide the Slider (above this window) to select a</div>
            <div>year.</div>
          </TextBody>
        </Tile>
        <Tile $x={1030} $y={99} $w={295} $h={100}>
          <TileTitle>Slider</TileTitle>
          <SliderHead>
            <svg width="14" height="15" viewBox="0 0 14 15"><path d="M0 0.5H1L14 7 1 14.5H0Z" fill="#2fa84a" /></svg>
            <span>yr = 2015</span>
          </SliderHead>
          <SliderScale viewBox="0 0 295 40">
            <rect x="16" y="20" width="263" height="20" fill="#f9f9f9" />
            <path d="M16 20H279" stroke="#ddd" strokeWidth="2" />
            <path d="M51.5 18V23M100.5 18V23M149 18V23M198 18V23M246.500 18V23" stroke="#ccc" />
            <path d="M16 12V27M280 12V27" stroke="#888" strokeWidth="2" />
            <path d="M258 5H282V13H274L270 19 266 13H258Z" fill="#999" />
            <g textAnchor="middle">
              <text x="52.500" y="32">2006</text>
              <text x="101" y="32">2008</text>
              <text x="150" y="32">2010</text>
              <text x="198.500" y="32">2012</text>
              <text x="247" y="32">2014</text>
            </g>
          </SliderScale>
        </Tile>
        <Tile $x={1030} $y={249} $w={295} $h={120}>
          <TileTitle>Background</TileTitle>
          <TextBody>
            <div>This CODAP document is of the location, wind, and</div>
            <div>pressure of hurricanes in Atlantic and Pacific</div>
            <div>Oceans. The dataset comes from NOAA at</div>
            <div>https://www.kaggle.com/noaa/hurricane-</div>
            <div>database.</div>
          </TextBody>
        </Tile>
        <Tile $x={1030} $y={374} $w={295} $h={220}>
          <TileTitle>Things to Try</TileTitle>
          <TextBody>
            <div>1. Change the horizontal or vertical axis on one of</div>
            <div>the graphs. Click on the graph axis, then select a</div>
            <div>new attribute from the drop-down menu.</div>
            <div>2. Create a new graph. Click on the Graph button.</div>
            <div>Using your mouse, drag the column header</div>
            <div>(attribute) to the horizontal or vertical axis of the</div>
            <div>graph until the region turns yellow. See how to do</div>
            <div>this at https://youtu.be/2RevLjyMNpI.</div>
            <div>3. Adjust the slider in the top right to change the</div>
            <div>year. What general direction on the Map do</div>
            <div>hurricanes go?</div>
          </TextBody>
        </Tile>
      </Canvas>
    </Page>
  );
}
